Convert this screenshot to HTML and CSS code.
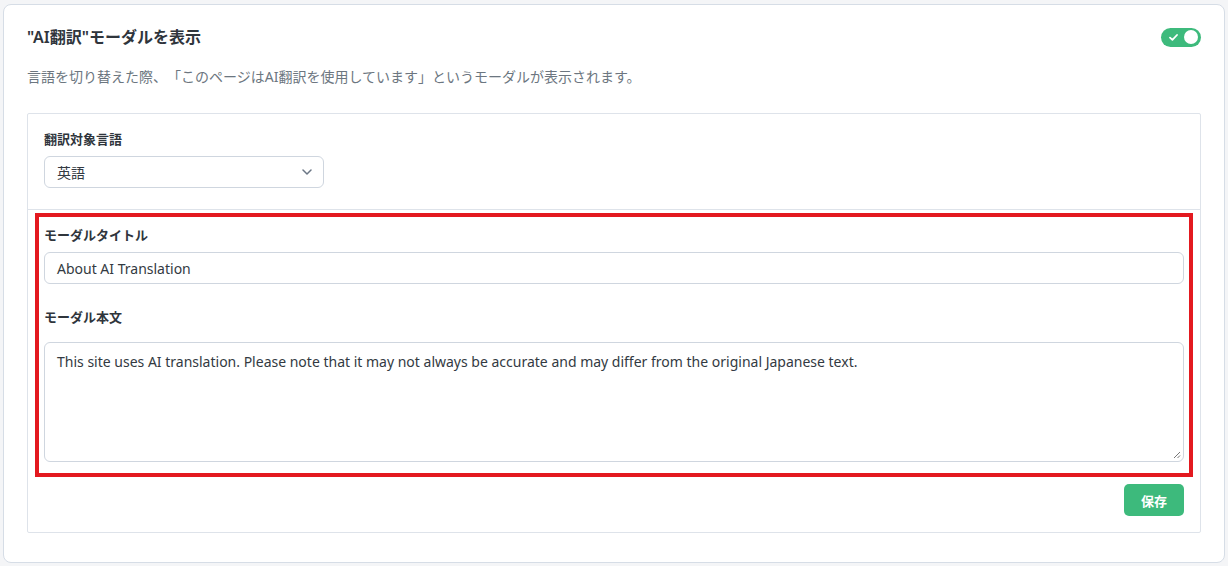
FILE: index.html
```html
<!DOCTYPE html>
<html lang="ja">
<head>
<meta charset="utf-8">
<title>AI翻訳モーダル設定</title>
<link rel="stylesheet" href="styles.css">
</head>
<body>
<div class="card">
  <div class="header">
    <h2 class="title">"AI翻訳"モーダルを表示</h2>
    <span class="toggle">
      <svg class="check" width="9" height="7" viewBox="0 0 9 7"><path d="M1 3.6 L3.4 5.8 L8 1" fill="none" stroke="#fff" stroke-width="1.8" stroke-linecap="round" stroke-linejoin="round"/></svg>
      <span class="knob"></span>
    </span>
  </div>
  <p class="desc">言語を切り替えた際、「このページはAI翻訳を使用しています」というモーダルが表示されます。</p>
  <div class="panel">
    <div class="panel-top">
      <div class="label">翻訳対象言語</div>
      <div class="select">
        <span>英語</span>
        <svg class="chev" width="10" height="6" viewBox="0 0 10 6"><path d="M1 1 L5 5 L9 1" fill="none" stroke="#6b7685" stroke-width="1.5" stroke-linecap="round" stroke-linejoin="round"/></svg>
      </div>
    </div>
    <div class="panel-bottom">
      <div class="highlight">
        <div class="label">モーダルタイトル</div>
        <div class="input">About AI Translation</div>
        <div class="label label-gap">モーダル本文</div>
        <div class="textarea">This site uses AI translation. Please note that it may not always be accurate and may differ from the original Japanese text.
          <svg class="grip" width="8" height="8" viewBox="0 0 8 8"><path d="M7 1 L1 7 M7 4.5 L4.5 7" stroke="#777" stroke-width="1" fill="none"/></svg>
        </div>
      </div>
      <div class="actions">
        <button class="save">保存</button>
      </div>
    </div>
  </div>
</div>
</body>
</html>
```

FILE: styles.css
```css
* { box-sizing: border-box; }
html, body { margin: 0; padding: 0; }
body {
  background: #f4f5f7;
  font-family: "Noto Sans", "Noto Sans CJK JP", sans-serif;
  color: #333a42;
  text-spacing-trim: space-all;
}
.card {
  margin: 4px 3px 3px 3px;
  height: 559px;
  background: #fff;
  border: 1px solid #d6dde6;
  border-radius: 8px;
  padding: 22px 23px 0 23px;
}
.header {
  display: flex;
  align-items: center;
  justify-content: space-between;
  height: 20px;
}
.title {
  margin: 0;
  font-size: 16px;
  font-weight: 600;
  line-height: 20px;
  color: #2f353c;
}
.toggle {
  width: 40px;
  height: 19px;
  border-radius: 10px;
  background: #3dba7c;
  display: flex;
  align-items: center;
  justify-content: space-between;
  padding: 0 3px 0 8px;
}
.check { display: block; }
.knob {
  width: 14px;
  height: 14px;
  border-radius: 50%;
  background: #fff;
}
.desc {
  margin: 20px 0 0 0;
  font-size: 14px;
  line-height: 20px;
  color: #6c7680;
}
.panel {
  margin-top: 26px;
  border: 1px solid #dee3ea;
  border-radius: 2px;
}
.panel-top {
  padding: 15px 16px 21px 16px;
  border-bottom: 1px solid #dee3ea;
}
.label {
  font-size: 13px;
  font-weight: 700;
  line-height: 20px;
  color: #2f353c;
}
.select {
  margin-top: 7px;
  width: 280px;
  height: 32px;
  border: 1px solid #cfd6df;
  border-radius: 6px;
  display: flex;
  align-items: center;
  justify-content: space-between;
  padding: 0 11px 0 12px;
  font-size: 14px;
  color: #333a42;
}
.chev { display: block; }
.panel-bottom {
  padding: 3px 16px 16px 16px;
}
.highlight {
  margin: 0 -9px;
  border: 4px solid #e3191f;
  padding: 8px 5px 11px 5px;
}
.input {
  margin-top: 7px;
  height: 32px;
  border: 1px solid #cfd6df;
  border-radius: 6px;
  padding: 0 12px;
  display: flex;
  align-items: center;
  font-size: 14px;
  color: #333a42;
}
.label-gap { margin-top: 23px; }
.textarea {
  position: relative;
  margin-top: 15px;
  height: 120px;
  border: 1px solid #cfd6df;
  border-radius: 6px;
  padding: 9px 12px;
  font-size: 14px;
  line-height: 20px;
  color: #333a42;
}
.grip {
  position: absolute;
  right: 2px;
  bottom: 2px;
}
.actions {
  display: flex;
  justify-content: flex-end;
  margin-top: 7px;
}
.save {
  width: 60px;
  height: 32px;
  border: none;
  border-radius: 5px;
  background: #3dba7c;
  color: #fff;
  font-family: "Noto Sans CJK JP", sans-serif;
  font-size: 13px;
  font-weight: 700;
}
```
